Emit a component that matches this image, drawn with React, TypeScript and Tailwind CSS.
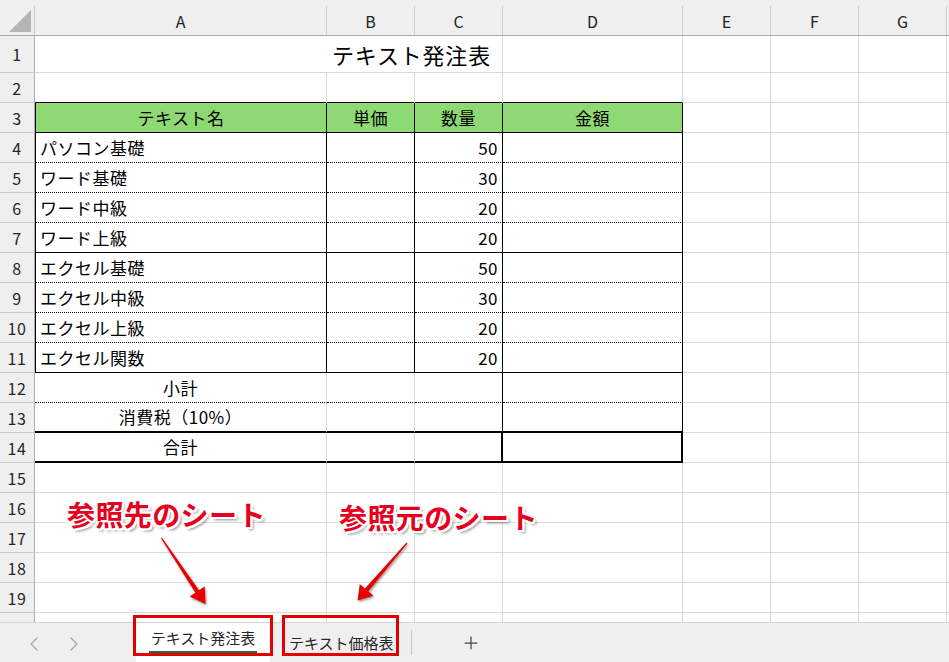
import React from 'react';
import { ChevronLeft, ChevronRight, Plus } from 'lucide-react';

// border pieces (right / bottom) used by the sheet cells
const GR = 'border-r border-r-[#dadada]';
const KR = 'border-r border-r-black';
const TR = 'border-r-2 border-r-black';
const GB = 'border-b border-b-[#dadada]';
const KB = 'border-b border-b-black';
const DB = 'border-b border-b-black [border-bottom-style:dotted]';
const TB = 'border-b-2 border-b-black';

const LEFT = 'justify-start pl-[4px]';
const CENTER = 'justify-center';
const RIGHT = 'justify-end pr-[4px]';

type CellProps = { w: string; cls: string; align?: string; children?: React.ReactNode };

const Cell: React.FC<CellProps> = ({ w, cls, align = LEFT, children }) => (
  <div className={`${w} shrink-0 h-full flex items-center whitespace-nowrap ${align} ${cls}`}>{children}</div>
);

const RowHead: React.FC<{ n?: number }> = ({ n }) => (
  <div className="w-[35px] shrink-0 h-full bg-[#efefef] border-r border-r-[#b0b0b0] border-b border-b-[#cacaca] flex items-center justify-center text-[16px] text-[#262626]">
    {n}
  </div>
);

const Tail: React.FC = () => (
  <>
    <div className={`w-[88px] shrink-0 h-full ${GR} ${GB}`} />
    <div className={`w-[88px] shrink-0 h-full ${GR} ${GB}`} />
    <div className={`w-[88px] shrink-0 h-full ${GR} ${GB}`} />
    <div className={`flex-1 h-full ${GB}`} />
  </>
);

const items: { name: string; qty: number; bottom: string }[] = [
  { name: 'パソコン基礎', qty: 50, bottom: DB },
  { name: 'ワード基礎', qty: 30, bottom: DB },
  { name: 'ワード中級', qty: 20, bottom: DB },
  { name: 'ワード上級', qty: 20, bottom: KB },
  { name: 'エクセル基礎', qty: 50, bottom: DB },
  { name: 'エクセル中級', qty: 30, bottom: DB },
  { name: 'エクセル上級', qty: 20, bottom: DB },
  { name: 'エクセル関数', qty: 20, bottom: KB },
];

const columns = [
  { label: 'A', w: 'w-[292px]' },
  { label: 'B', w: 'w-[88px]' },
  { label: 'C', w: 'w-[88px]' },
  { label: 'D', w: 'w-[180px]' },
  { label: 'E', w: 'w-[88px]' },
  { label: 'F', w: 'w-[88px]' },
  { label: 'G', w: 'w-[88px]' },
];

const outline =
  '[text-shadow:-2px_-2px_0_#fff,2px_-2px_0_#fff,-2px_2px_0_#fff,2px_2px_0_#fff,0_-2px_0_#fff,0_2px_0_#fff,-2px_0_0_#fff,2px_0_0_#fff,3px_3px_3px_rgba(0,0,0,0.45)]';

const App: React.FC = () => {
  return (
    <div className="relative w-[949px] h-[662px] overflow-hidden bg-white text-black font-['Noto_Sans_CJK_JP','Noto_Sans',sans-serif]">
      {/* column headers */}
      <div className="flex h-[36px] bg-[#efefef] border-b border-b-[#ababab]">
        <div className="w-[35px] shrink-0">
          <svg width="35" height="35" viewBox="0 0 35 35">
            <polygon points="9,32 31,32 31,10" fill="#b5b5b5" />
            <line x1="34.5" y1="6" x2="34.5" y2="35" stroke="#c8c8c8" />
          </svg>
        </div>
        {columns.map(c => (
          <div key={c.label} className={`${c.w} shrink-0 mt-[6px] h-[29px] border-r border-r-[#cfcfcf] flex items-center justify-center text-[16px] text-[#222]`}>
            {c.label}
          </div>
        ))}
        <div className="flex-1" />
      </div>

      {/* grid body */}
      <div className="h-[586px] overflow-hidden text-[17px] tracking-[0.5px]">
        {/* row 1 */}
        <div className="flex h-[37px]">
          <RowHead n={1} />
          <Cell w="w-[468px]" cls={`${GR} ${GB}`}>
            <span className="pl-[293px] text-[22px] tracking-[0.8px]">テキスト発注表</span>
          </Cell>
          <Cell w="w-[180px]" cls={`${GR} ${GB}`} />
          <Tail />
        </div>

        {/* row 2 */}
        <div className="flex h-[30px]">
          <RowHead n={2} />
          <Cell w="w-[292px]" cls={`${GR} ${KB}`} />
          <Cell w="w-[88px]" cls={`${GR} ${KB}`} />
          <Cell w="w-[88px]" cls={`${GR} ${KB}`} />
          <Cell w="w-[180px]" cls={`${GR} ${KB}`} />
          <Tail />
        </div>

        {/* row 3 : table header */}
        <div className="flex h-[30px]">
          <RowHead n={3} />
          <Cell w="w-[292px]" align={CENTER} cls={`border-l border-l-black bg-[#8ed973] ${KR} ${KB}`}>テキスト名</Cell>
          <Cell w="w-[88px]" align={CENTER} cls={`bg-[#8ed973] ${KR} ${KB}`}>単価</Cell>
          <Cell w="w-[88px]" align={CENTER} cls={`bg-[#8ed973] ${KR} ${KB}`}>数量</Cell>
          <Cell w="w-[180px]" align={CENTER} cls={`bg-[#8ed973] ${KR} ${KB}`}>金額</Cell>
          <Tail />
        </div>

        {/* rows 4-11 */}
        {items.map((it, i) => (
          <div key={it.name} className="flex h-[30px]">
            <RowHead n={i + 4} />
            <Cell w="w-[292px]" cls={`border-l border-l-black ${KR} ${it.bottom}`}>{it.name}</Cell>
            <Cell w="w-[88px]" cls={`${KR} ${it.bottom}`} />
            <Cell w="w-[88px]" align={RIGHT} cls={`${KR} ${it.bottom}`}>{it.qty}</Cell>
            <Cell w="w-[180px]" cls={`${KR} ${it.bottom}`} />
            <Tail />
          </div>
        ))}

        {/* row 12 */}
        <div className="flex h-[30px]">
          <RowHead n={12} />
          <Cell w="w-[292px]" align={CENTER} cls={`${GR} ${DB}`}>小計</Cell>
          <Cell w="w-[88px]" cls={`${GR} ${DB}`} />
          <Cell w="w-[88px]" cls={`${KR} ${DB}`} />
          <Cell w="w-[180px]" cls={`${KR} ${DB}`} />
          <Tail />
        </div>

        {/* row 13 */}
        <div className="flex h-[30px]">
          <RowHead n={13} />
          <Cell w="w-[292px]" align={CENTER} cls={`${GR} ${TB}`}>消費税（10%）</Cell>
          <Cell w="w-[88px]" cls={`${GR} ${TB}`} />
          <Cell w="w-[88px]" cls={`${KR} ${TB}`} />
          <Cell w="w-[180px]" cls={`${KR} ${TB}`} />
          <Tail />
        </div>

        {/* row 14 */}
        <div className="flex h-[30px]">
          <RowHead n={14} />
          <Cell w="w-[292px]" align={CENTER} cls={`${GR} ${TB}`}>合計</Cell>
          <Cell w="w-[88px]" cls={`${GR} ${TB}`} />
          <Cell w="w-[88px]" cls={`${TR} ${TB}`} />
          <Cell w="w-[180px]" cls={`${TR} ${TB}`} />
          <Tail />
        </div>

        {/* rows 15-20 empty (row 20 is only a sliver, its number hidden) */}
        {[15, 16, 17, 18, 19, 20].map(n => (
          <div key={n} className="flex h-[30px]">
            <RowHead n={n < 20 ? n : undefined} />
            <Cell w="w-[292px]" cls={`${GR} ${GB}`} />
            <Cell w="w-[88px]" cls={`${GR} ${GB}`} />
            <Cell w="w-[88px]" cls={`${GR} ${GB}`} />
            <Cell w="w-[180px]" cls={`${GR} ${GB}`} />
            <Tail />
          </div>
        ))}
      </div>

      {/* sheet tabs */}
      <div className="flex h-[40px] bg-[#efefef] border-t border-t-[#d6d6d6] text-[15px] text-[#262626]">
        <div className="w-[136px] shrink-0 flex items-center text-[#a6a6a6]">
          <ChevronLeft size={24} strokeWidth={1.2} className="ml-[22px] mt-[2px]" />
          <ChevronRight size={24} strokeWidth={1.2} className="ml-[16px] mt-[2px]" />
        </div>
        <div className="w-[134px] shrink-0 bg-white flex flex-col items-center">
          <span className="pt-[7px] leading-none">テキスト発注表</span>
          <div className="mt-[6px] w-[108px] h-[2px] bg-[#1e7145]" />
        </div>
        <div className="w-[141px] shrink-0 pl-[19px] pt-[12px] leading-none">テキスト価格表</div>
        <div className="w-px h-[25px] mt-[7px] bg-[#c6c6c6]" />
        <div className="ml-[49px] flex items-center text-[#444]">
          <Plus size={20} strokeWidth={1.5} />
        </div>
      </div>

      {/* annotations */}
      <div className={`absolute left-[67px] top-[500px] text-[28px] tracking-[0.4px] font-bold leading-none text-[#e6001e] ${outline}`}>参照先のシート</div>
      <div className={`absolute left-[339px] top-[503px] text-[28px] tracking-[0.4px] font-bold leading-none text-[#e6001e] ${outline}`}>参照元のシート</div>

      <svg className="absolute left-0 top-0 pointer-events-none" width="949" height="662" viewBox="0 0 949 662">
        <defs>
          <filter id="sh" x="-20%" y="-20%" width="140%" height="140%">
            <feDropShadow dx="1" dy="1.5" stdDeviation="1" floodColor="#000" floodOpacity="0.45" />
          </filter>
        </defs>
        <polygon filter="url(#sh)" fill="#e60000" points="161,538.3 195.4,592.7 189.7,596.5 205.5,604 204.7,586.5 199,590.3 162,537.7" />
        <polygon filter="url(#sh)" fill="#e60000" points="406.5,542.6 364.9,588.5 359.8,584 357.5,600.5 373.4,595.8 368.3,591.3 407.5,543.4" />
      </svg>

      <div className="absolute left-[133px] top-[615px] w-[140px] h-[41px] border-[3px] border-[#e40000]" />
      <div className="absolute left-[282px] top-[615px] w-[117px] h-[41px] border-[3px] border-[#e40000]" />
    </div>
  );
};

export default App;
